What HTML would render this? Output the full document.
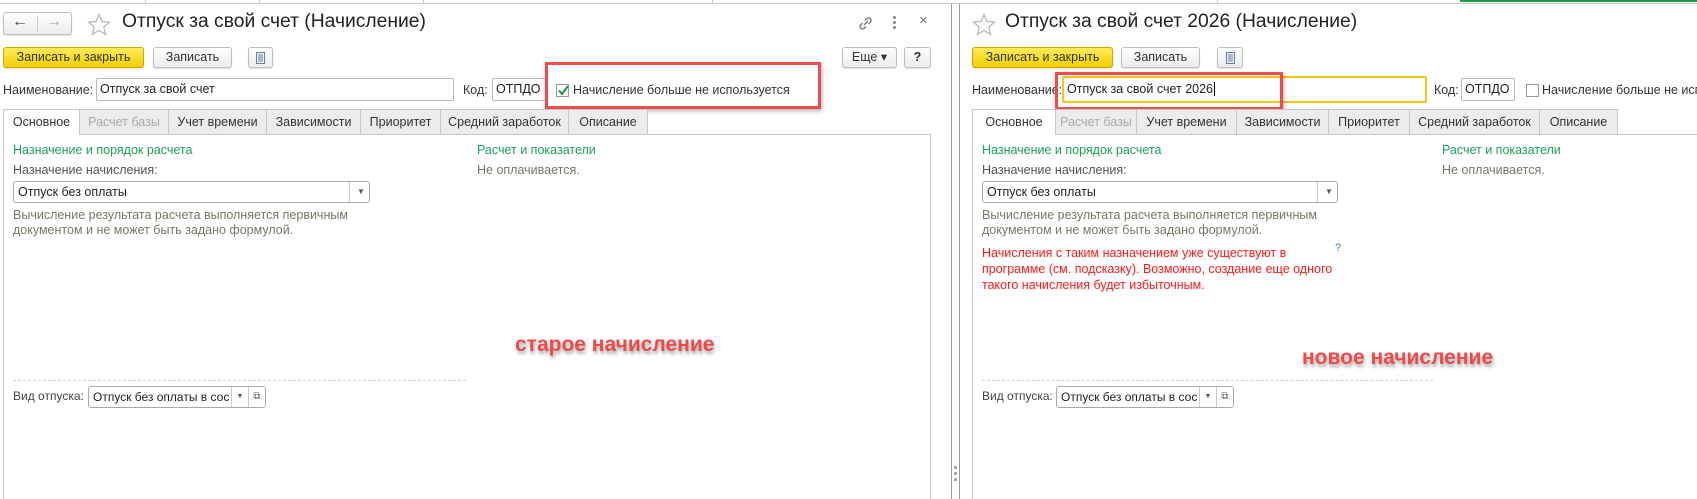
<!DOCTYPE html>
<html><head><meta charset="utf-8">
<style>
*{box-sizing:border-box;margin:0;padding:0}
body{width:1697px;height:499px;background:#fff;position:relative;overflow:hidden;font-family:"Liberation Sans",Arial,sans-serif;font-size:12.5px;color:#333}
.a{position:absolute;white-space:nowrap}
.btn{position:absolute;height:21px;border:1px solid #bdbdbd;border-radius:3px;background:linear-gradient(#fff,#ececec);text-align:center;line-height:19px;color:#333;box-shadow:0 1px 1px rgba(0,0,0,.12)}
.yel{background:linear-gradient(#ffeb5a,#f2cf00);border-color:#c9a900;color:#333}
.inp{position:absolute;height:23px;border:1px solid #b9b9b9;border-radius:2px;background:#fff;line-height:21px;padding-left:3px;color:#222}
.tab{position:absolute;top:109px;height:26px;border:1px solid #c7c7c7;background:#ececec;text-align:center;line-height:24px;color:#333}
.tab.on{background:#fff;border-bottom-color:#fff}
.tab.dis{color:#aaa}
.grn{color:#1ba05a}
.gr{color:#7a7666}
.red{color:#ff1a1a}
.rb{position:absolute;border:3px solid #f24b4b;box-shadow:1px 2px 4px rgba(0,0,0,.3)}
.ann{position:absolute;font-weight:bold;font-size:21px;color:#f24848;text-shadow:1px 3px 3px rgba(0,0,0,.35);white-space:nowrap}
.dd{position:absolute;height:22px;border:1px solid #a9a9a9;border-radius:3px;background:#fff;line-height:20px;padding-left:4px;color:#222}
.t{font-size:19.3px;color:#222}
</style></head><body>
<div class="a" style="left:0;top:3px;width:1697px;height:1px;background:#c9c9c9"></div>
<div class="a" style="left:145px;top:0;width:1px;height:4px;background:#c9c9c9"></div>
<div class="a" style="left:259px;top:0;width:1px;height:4px;background:#c9c9c9"></div>
<div class="a" style="left:423px;top:0;width:1px;height:4px;background:#c9c9c9"></div>
<div class="a" style="left:712px;top:0;width:1px;height:4px;background:#c9c9c9"></div>
<div class="a" style="left:1217px;top:0;width:1px;height:4px;background:#c9c9c9"></div>
<div class="a" style="left:1460px;top:0;width:237px;height:2px;background:#1f9b4a"></div>

<!-- LEFT PANEL -->
<div class="btn" style="left:3px;top:12px;width:69px;height:23px"></div>
<div class="a" style="left:37px;top:15px;width:1px;height:17px;background:#ccc"></div>
<div class="a" style="left:12px;top:13px;font-size:16px;color:#444;font-weight:bold">←</div>
<div class="a" style="left:46px;top:13px;font-size:16px;color:#aaa;font-weight:bold">→</div>
<svg class="a" style="left:87px;top:13px" width="24" height="23" viewBox="0 0 24 23"><path d="M12 1.5l3 7 7.5.6-5.7 4.9 1.8 7.4L12 17.5l-6.6 3.9 1.8-7.4L1.5 9.1 9 8.5z" fill="none" stroke="#b5b5b5" stroke-width="1.2"/></svg>
<div class="a t" style="left:122px;top:11px">Отпуск за свой счет (Начисление)</div>
<svg class="a" style="left:857px;top:15px" width="17" height="17" viewBox="0 0 17 17"><path d="M7 10l4-4M5.5 8l-2 2a2.5 2.5 0 003.5 3.5l2-2M11.5 9l2-2A2.5 2.5 0 0010 3.5l-2 2" fill="none" stroke="#777" stroke-width="1.3"/></svg>
<div class="a" style="left:893px;top:16px;width:3px;height:3px;background:#888;border-radius:2px"></div>
<div class="a" style="left:893px;top:21px;width:3px;height:3px;background:#888;border-radius:2px"></div>
<div class="a" style="left:893px;top:26px;width:3px;height:3px;background:#888;border-radius:2px"></div>
<div class="a" style="left:919px;top:12px;font-size:15px;color:#777">×</div>

<div class="btn yel" style="left:3px;top:47px;width:141px">Записать и закрыть</div>
<div class="btn" style="left:153px;top:47px;width:79px">Записать</div>
<div class="btn" style="left:248px;top:47px;width:25px"><svg width="9" height="12" viewBox="0 0 9 12" style="margin-top:4px"><rect x="0.5" y="0.5" width="8" height="11" fill="#eef2f8" stroke="#6b7d99"/><path d="M2 3h5M2 5h5M2 7h5M2 9h5" stroke="#6b7d99"/></svg></div>
<div class="btn" style="left:842px;top:47px;width:55px">Еще ▾</div>
<div class="btn" style="left:904px;top:47px;width:27px;font-weight:bold">?</div>

<div class="a" style="left:3px;top:83px">Наименование:</div>
<div class="inp" style="left:96px;top:78px;width:358px">Отпуск за свой счет</div>
<div class="a" style="left:463px;top:83px">Код:</div>
<div class="inp" style="left:492px;top:78px;width:54px">ОТПДО</div>
<div class="a" style="left:556px;top:84px;width:13px;height:13px;border:1px solid #999;background:#fff"></div>
<svg class="a" style="left:557px;top:85px" width="12" height="11" viewBox="0 0 12 11"><path d="M2 5.5l3 3.5 6-8" fill="none" stroke="#1a9a3a" stroke-width="2"/></svg>
<div class="a" style="left:573px;top:83px">Начисление больше не используется</div>
<div class="rb" style="left:545px;top:62px;width:276px;height:47px"></div>

<div class="a" style="left:3px;top:134px;width:928px;height:1px;background:#c7c7c7"></div>
<div class="tab on" style="left:3px;width:77px">Основное</div>
<div class="tab dis" style="left:79px;width:90px">Расчет базы</div>
<div class="tab" style="left:168px;width:99px">Учет времени</div>
<div class="tab" style="left:266px;width:95px">Зависимости</div>
<div class="tab" style="left:360px;width:81px">Приоритет</div>
<div class="tab" style="left:440px;width:129px">Средний заработок</div>
<div class="tab" style="left:568px;width:80px">Описание</div>
<div class="a" style="left:3px;top:134px;width:1px;height:365px;background:#c7c7c7"></div>
<div class="a" style="left:930px;top:134px;width:1px;height:365px;background:#c7c7c7"></div>

<div class="a grn" style="left:13px;top:143px">Назначение и порядок расчета</div>
<div class="a" style="left:13px;top:163px;color:#555">Назначение начисления:</div>
<div class="dd" style="left:13px;top:181px;width:357px">Отпуск без оплаты<div class="a" style="left:335px;top:0;width:1px;height:20px;background:#ccc"></div><div class="a" style="left:343px;top:0;font-size:8px;color:#555">▼</div></div>
<div class="a gr" style="left:13px;top:208px">Вычисление результата расчета выполняется первичным</div>
<div class="a gr" style="left:13px;top:223px">документом и не может быть задано формулой.</div>
<div class="a grn" style="left:477px;top:143px">Расчет и показатели</div>
<div class="a gr" style="left:477px;top:163px">Не оплачивается.</div>
<div class="ann" style="left:515px;top:333px">старое начисление</div>
<div class="a" style="left:13px;top:380px;width:453px;border-top:1px dashed #d0d0d0"></div>
<div class="a" style="left:13px;top:389px;color:#444;font-size:12px">Вид отпуска:</div>
<div class="dd" style="left:88px;top:386px;width:178px;overflow:hidden;font-size:12px">Отпуск без оплаты в сос<div class="a" style="left:142px;top:0;width:17px;height:20px;background:#fff;border-left:1px solid #ccc;font-size:7px;text-align:center;color:#555">▼</div><div class="a" style="left:159px;top:0;width:17px;height:20px;background:#fff;border-left:1px solid #ccc;font-size:10px;text-align:center;color:#555">⧉</div></div>

<div class="a" style="left:951px;top:4px;width:1px;height:495px;background:#999"></div>
<div class="a" style="left:959px;top:4px;width:1px;height:495px;background:#999"></div>
<div class="a" style="left:954px;top:466px;width:3px;height:3px;background:#aaa"></div>
<div class="a" style="left:954px;top:472px;width:3px;height:3px;background:#aaa"></div>
<div class="a" style="left:954px;top:478px;width:3px;height:3px;background:#aaa"></div>

<!-- RIGHT PANEL -->
<svg class="a" style="left:972px;top:13px" width="24" height="23" viewBox="0 0 24 23"><path d="M12 1.5l3 7 7.5.6-5.7 4.9 1.8 7.4L12 17.5l-6.6 3.9 1.8-7.4L1.5 9.1 9 8.5z" fill="none" stroke="#b5b5b5" stroke-width="1.2"/></svg>
<div class="a t" style="left:1005px;top:11px">Отпуск за свой счет 2026 (Начисление)</div>
<div class="btn yel" style="left:972px;top:47px;width:141px">Записать и закрыть</div>
<div class="btn" style="left:1121px;top:47px;width:79px">Записать</div>
<div class="btn" style="left:1217px;top:47px;width:26px"><svg width="9" height="12" viewBox="0 0 9 12" style="margin-top:4px"><rect x="0.5" y="0.5" width="8" height="11" fill="#eef2f8" stroke="#6b7d99"/><path d="M2 3h5M2 5h5M2 7h5M2 9h5" stroke="#6b7d99"/></svg></div>

<div class="a" style="left:972px;top:83px">Наименование:</div>
<div class="inp" style="left:1062px;top:76px;width:365px;height:27px;border:2px solid #f5c518;line-height:23px">Отпуск за свой счет 2026<span style="border-left:1px solid #000;margin-left:1px"></span></div>
<div class="a" style="left:1434px;top:83px">Код:</div>
<div class="inp" style="left:1461px;top:78px;width:54px">ОТПДО</div>
<div class="a" style="left:1526px;top:84px;width:13px;height:13px;border:1px solid #999;background:#fff"></div>
<div class="a" style="left:1542px;top:83px">Начисление больше не используется</div>
<div class="rb" style="left:1055px;top:72px;width:228px;height:38px"></div>

<div class="a" style="left:972px;top:134px;width:725px;height:1px;background:#c7c7c7"></div>
<div class="tab on" style="left:972px;width:84px">Основное</div>
<div class="tab dis" style="left:1055px;width:82px">Расчет базы</div>
<div class="tab" style="left:1136px;width:101px">Учет времени</div>
<div class="tab" style="left:1236px;width:93px">Зависимости</div>
<div class="tab" style="left:1328px;width:82px">Приоритет</div>
<div class="tab" style="left:1409px;width:131px">Средний заработок</div>
<div class="tab" style="left:1539px;width:79px">Описание</div>
<div class="a" style="left:972px;top:134px;width:1px;height:365px;background:#c7c7c7"></div>

<div class="a grn" style="left:982px;top:143px">Назначение и порядок расчета</div>
<div class="a" style="left:982px;top:163px;color:#555">Назначение начисления:</div>
<div class="dd" style="left:982px;top:181px;width:356px">Отпуск без оплаты<div class="a" style="left:334px;top:0;width:1px;height:20px;background:#ccc"></div><div class="a" style="left:342px;top:0;font-size:8px;color:#555">▼</div></div>
<div class="a gr" style="left:982px;top:208px">Вычисление результата расчета выполняется первичным</div>
<div class="a gr" style="left:982px;top:223px">документом и не может быть задано формулой.</div>
<div class="a red" style="left:982px;top:246px">Начисления с таким назначением уже существуют в</div>
<div class="a red" style="left:982px;top:262px">программе (см. подсказку). Возможно, создание еще одного</div>
<div class="a red" style="left:982px;top:278px">такого начисления будет избыточным.</div>
<div class="a" style="left:1335px;top:242px;color:#2a7ec8;font-size:11px">?</div>
<div class="a grn" style="left:1442px;top:143px">Расчет и показатели</div>
<div class="a gr" style="left:1442px;top:163px">Не оплачивается.</div>
<div class="ann" style="left:1302px;top:346px">новое начисление</div>
<div class="a" style="left:982px;top:380px;width:451px;border-top:1px dashed #d0d0d0"></div>
<div class="a" style="left:982px;top:389px;color:#444;font-size:12px">Вид отпуска:</div>
<div class="dd" style="left:1056px;top:386px;width:178px;overflow:hidden;font-size:12px">Отпуск без оплаты в сос<div class="a" style="left:142px;top:0;width:17px;height:20px;background:#fff;border-left:1px solid #ccc;font-size:7px;text-align:center;color:#555">▼</div><div class="a" style="left:159px;top:0;width:17px;height:20px;background:#fff;border-left:1px solid #ccc;font-size:10px;text-align:center;color:#555">⧉</div></div>
</body></html>
